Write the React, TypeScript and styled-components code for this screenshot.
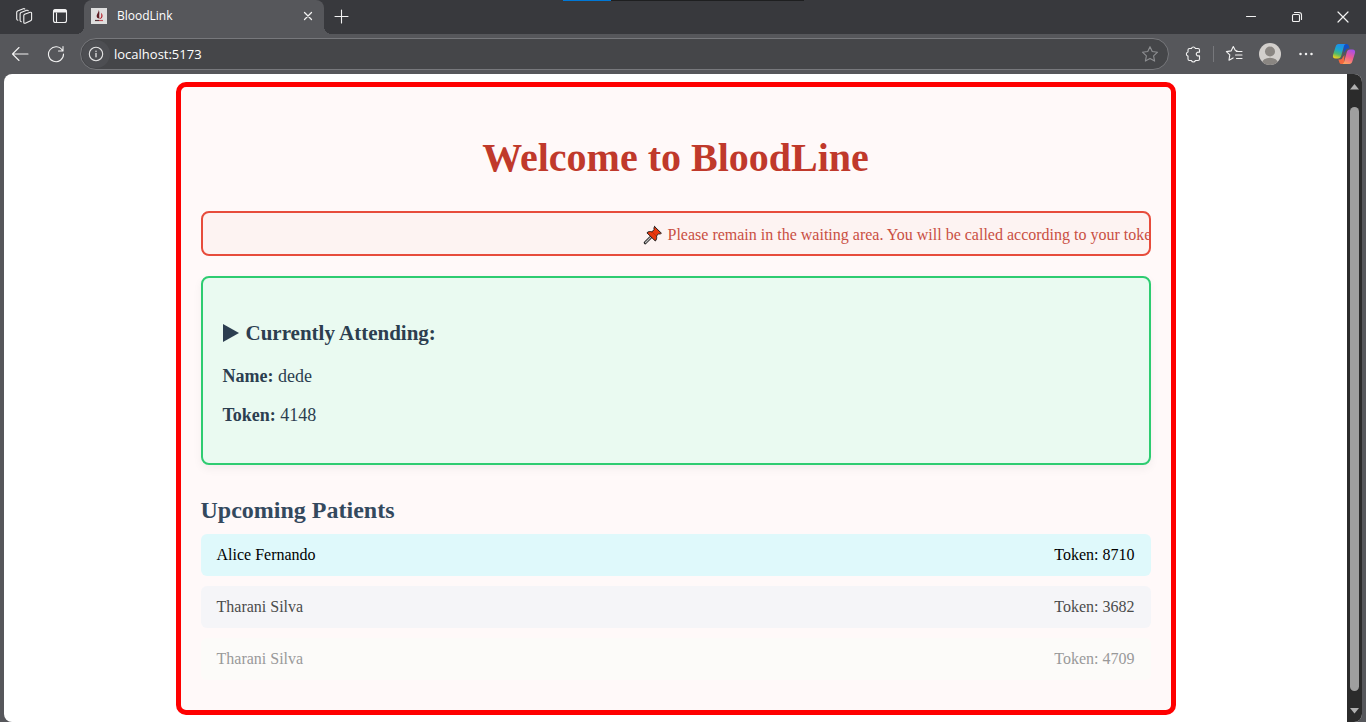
import React from "react";
import styled, { createGlobalStyle } from "styled-components";

const GlobalStyle = createGlobalStyle`
  * { box-sizing: border-box; }
  body { margin: 0; background: #56575b; }
  svg { display: block; flex: none; }
`;

const Window = styled.div`
  display: flex;
  flex-direction: column;
  min-height: 100vh;
  background: #56575b;
  font-family: "Open Sans", "Noto Sans", sans-serif;
`;

const TabStrip = styled.header`
  position: relative;
  display: flex;
  height: 34px;
  background: #38393d;
`;

const LoadingStrip = styled.div`
  position: absolute;
  top: 0;
  left: 563px;
  width: 241px;
  height: 1px;
  background: linear-gradient(to right, #0078d7 48px, #1e1f20 48px);
`;

const TabTools = styled.div`
  display: flex;
  align-items: center;
  gap: 12px;
  width: 84px;
  padding: 0 0 2px 12px;
`;

const IconButton = styled.button<{ $w?: number; $h?: number }>`
  display: flex;
  align-items: center;
  justify-content: center;
  flex: none;
  width: ${(p) => p.$w ?? 24}px;
  height: ${(p) => p.$h ?? 24}px;
  padding: 0;
  border: 0;
  background: none;
  color: #f2f2f2;
`;

const Tab = styled.div`
  position: relative;
  display: flex;
  align-items: center;
  width: 240px;
  padding: 0 4px 2px 7px;
  border-radius: 8px 8px 0 0;
  background: #56575b;

  &::before,
  &::after {
    content: "";
    position: absolute;
    bottom: 0;
    width: 8px;
    height: 8px;
  }
  &::before {
    right: 100%;
    background: radial-gradient(circle at 0 0, #38393d 8px, #56575b 8px);
  }
  &::after {
    left: 100%;
    background: radial-gradient(circle at 100% 0, #38393d 8px, #56575b 8px);
  }
`;

const TabTitle = styled.span`
  flex: 1;
  margin-left: 10px;
  color: #fff;
  font-size: 12px;
  line-height: 16px;
`;

const WindowControls = styled.div`
  display: flex;
  margin-left: auto;
`;

const Toolbar = styled.div`
  display: flex;
  align-items: center;
  height: 40px;
  padding-left: 2px;
`;

const AddressBar = styled.label`
  display: flex;
  align-items: center;
  flex: 1;
  height: 32px;
  margin: 0 12px 0 6px;
  padding: 0 6px 0 1px;
  border: 1px solid #77787c;
  border-radius: 16px;
  background: #454649;
`;

const InfoBadge = styled.span`
  display: flex;
  align-items: center;
  justify-content: center;
  width: 28px;
  height: 28px;
  border-radius: 50%;
  background: #4d4e52;
  color: #e4e4e4;
`;

const AddressInput = styled.input`
  flex: 1;
  min-width: 0;
  margin-left: 4px;
  padding: 0;
  border: 0;
  outline: 0;
  background: none;
  color: #fff;
  font: 13px/20px "Open Sans", "Noto Sans", sans-serif;
`;

const Divider = styled.span`
  width: 1px;
  height: 16px;
  margin: 0 4px 0 8px;
  background: #77787c;
`;

const Viewport = styled.div`
  display: flex;
  flex: 1;
  margin: 0 4px;
  border-radius: 8px;
  overflow: hidden;
  background: #fff;
`;

const Page = styled.main`
  flex: 1;
  min-width: 0;
  padding: 8px 8px 7px;
  font-family: "Liberation Serif", "Times New Roman", serif;
`;

const ScrollTrack = styled.div`
  display: flex;
  flex-direction: column;
  align-items: center;
  gap: 17px;
  width: 15px;
  padding: 10px 0 8px;
  background: #2b2b2b;
`;

const ScrollThumb = styled.div`
  flex: 1;
  width: 9px;
  border-radius: 5px;
  background: #9f9f9f;
`;

const Card = styled.section`
  max-width: 1000px;
  margin: 0 auto;
  padding: 20px;
  border: 5px solid #f00;
  border-radius: 10px;
  background: #fff9f9;
`;

const Title = styled.h1`
  margin: 28px 0 30px;
  color: #c0392b;
  font-size: 40px;
  line-height: 46px;
  text-align: center;
`;

const Notice = styled.div`
  display: flex;
  height: 45px;
  margin-bottom: 20px;
  overflow: hidden;
  border: 2px solid #e74c3c;
  border-radius: 8px;
  background: #fdf3f2;
`;

const NoticeText = styled.p`
  display: flex;
  align-items: center;
  gap: 5px;
  margin: 0 0 0 440px;
  padding-top: 3px;
  color: #c94f43;
  font-size: 16px;
  line-height: 20px;
  white-space: nowrap;
`;

const Current = styled.section`
  margin-bottom: 30px;
  padding: 40px 20px 38px;
  border: 2px solid #2ecc71;
  border-radius: 8px;
  background: #eafaf1;
  box-shadow: 0 4px 10px rgba(0, 0, 0, 0.05);
  color: #2c3e50;
`;

const CurrentHeading = styled.h3`
  display: flex;
  align-items: center;
  gap: 7px;
  margin: 3px 0 21px;
  font-size: 21px;
  line-height: 24px;
`;

const Detail = styled.p`
  margin: 0 0 19px;
  font-size: 18px;
  line-height: 20px;

  &:last-child {
    margin-bottom: 0;
  }
`;

const ListHeading = styled.h2`
  margin: 0 0 8px;
  color: #34495e;
  font-size: 24px;
  line-height: 31px;
`;

const List = styled.ul`
  margin: 0;
  padding: 0;
  list-style: none;
`;

const Patient = styled.li<{ $bg: string; $fg: string }>`
  display: flex;
  justify-content: space-between;
  margin-bottom: 10px;
  padding: 12px 16px;
  border-radius: 6px;
  background: ${(p) => p.$bg};
  color: ${(p) => p.$fg};
  font-size: 16px;
  line-height: 18px;
`;

const patients = [
  { name: "Alice Fernando", token: 8710, bg: "#dff9fb", fg: "#000" },
  { name: "Tharani Silva", token: 3682, bg: "#f5f5f8", fg: "#4b4b4b" },
  { name: "Tharani Silva", token: 4709, bg: "#fcfbf9", fg: "#999" },
];

type LineIconProps = { size?: number; children: React.ReactNode };
const LineIcon = ({ size = 16, children }: LineIconProps) => (
  <svg width={size} height={size} viewBox={`0 0 ${size} ${size}`} fill="none" stroke="currentColor" strokeWidth="1.1" strokeLinecap="round" strokeLinejoin="round" aria-hidden="true">
    {children}
  </svg>
);

const WorkspacesIcon = () => (
  <LineIcon size={18}>
    <path d="m9.600 7.300 5.600-2c.9-.2 1.400.2 1.400 1v5.900c0 .7-.3 1.200-1 1.500l-5.300 2.500c-.9.300-1.500 0-1.500-1V8.800c0-.7.200-1.200.8-1.500Z" />
    <path d="M6.300 14.800c-.8-.2-1.200-.6-1.200-1.500V7c0-.7.300-1.200.9-1.500l5.700-2.200c.6-.2 1.100-.1 1.500.3" />
    <path d="M2.900 13.200c-.8-.2-1.200-.7-1.200-1.500V5.500c0-.7.300-1.200.9-1.500l5.700-2.300c.6-.2 1.100-.1 1.500.3" />
  </LineIcon>
);

const VerticalTabsIcon = () => (
  <LineIcon>
    <rect x="1.500" y="1.500" width="13" height="13" rx="2" />
    <path d="M2.500 3.500h11M2.500 2.700h11" strokeWidth="2.200" />
    <path d="M4.500 5v9" />
  </LineIcon>
);

const Favicon = () => (
  <svg width="16" height="16" viewBox="0 0 16 16" aria-hidden="true">
    <path fill="#dedede" d="M0 0h16v16H0z" />
    <path fill="#5d1c22" d="M7.800 2c.8 2 .5 3.600.4 5.600 0 1.400.3 2 .1 3-1.700 0-2.900-1.300-2.600-3.100C6 5.700 7.600 4.500 7.800 2Z" />
    <path fill="#b3202b" d="M10.200 4.800c1.500 1.700 1.800 3.600.8 5-.7.900-1.700 1.100-3.200 1.100 1.700-.8 2.400-1.400 2.500-2.800.1-1.200-.2-1.900-.1-3.300Z" />
    <path stroke="#553338" strokeWidth="1.200" d="M4 12.500h4" />
    <path stroke="#c14c54" strokeWidth="1.200" d="M8 12.500h4" />
  </svg>
);

const CopilotIcon = () => (
  <svg width="24" height="22" viewBox="0 0 24 22" aria-hidden="true">
    <defs>
      <linearGradient id="cpLeft" x1="0.600" y1="0" x2="0.300" y2="1">
        <stop offset="0" stopColor="#1b8df0" />
        <stop offset="0.400" stopColor="#1ba6cf" />
        <stop offset="0.700" stopColor="#4fb96b" />
        <stop offset="1" stopColor="#f0d01c" />
      </linearGradient>
      <linearGradient id="cpRight" x1="0.700" y1="0" x2="0.300" y2="1">
        <stop offset="0" stopColor="#a64fe8" />
        <stop offset="0.500" stopColor="#ee5c91" />
        <stop offset="1" stopColor="#ffa35c" />
      </linearGradient>
    </defs>
    <path fill="#1250c4" d="M12 1h2.600c1.200 0 1.800.7 2.100 1.800l.8 2.700h-1.700c-1.300 0-2 .8-2.400 2L11.600 10Z" />
    <path fill="#f3683e" d="M12 21H9.400c-1.200 0-1.800-.7-2.100-1.800l-.9-2.700h1.800c1.300 0 2-.8 2.400-2l1.800-2.500Z" />
    <path fill="url(#cpLeft)" d="M6.600 1H14c-1.300.3-1.800 1.200-2.200 2.500L9.400 12.200C8.700 14.500 7.900 15.500 5.900 15.500H3.600C1.300 15.500.4 14 1.100 11.700L3.600 3.700C4.200 1.900 5 1 6.600 1Z" />
    <path fill="url(#cpRight)" d="M17.400 21H10c1.300-.3 1.800-1.200 2.200-2.500l2.400-8.700C15.300 7.500 16.100 6.500 18.100 6.500h2.300c2.300 0 3.200 1.500 2.500 3.800l-2.500 8c-.6 1.800-1.400 2.700-3 2.700Z" />
  </svg>
);

const AvatarIcon = () => (
  <svg width="22" height="22" viewBox="0 0 22 22" aria-hidden="true">
    <clipPath id="avatarClip"><circle cx="11" cy="11" r="11" /></clipPath>
    <g clipPath="url(#avatarClip)">
      <path fill="#d2cfcc" d="M0 0h22v22H0z" />
      <circle cx="11" cy="8.500" r="5" fill="#8a8682" />
      <ellipse cx="11" cy="20" rx="8" ry="5.200" fill="#8a8682" />
    </g>
  </svg>
);

const PushpinIcon = () => (
  <svg width="20" height="20" viewBox="0 0 20 20" strokeLinejoin="round" strokeLinecap="round" aria-hidden="true">
    <path d="m7.500 12.500-5.300 5.300" stroke="#222" strokeWidth="3" />
    <path d="m7.500 12.500-5 5" stroke="#b9b9b9" strokeWidth="1.200" />
    <path fill="#e8380d" stroke="#222" d="M11.600 1.600 18.400 8.200c-.9.900-2 .9-2.900.6l-2 2.200c.5 1.900.1 3.700-1.200 5L3.900 7.800c1.400-1.300 3.200-1.600 4.900-1l2.400-2.100c-.4-1.100-.4-2.200.4-3.100Z" />
    <path stroke="#b92a06" strokeWidth="0.800" d="m9 7 4.300 4" />
  </svg>
);

const star = "m8 1.500 2 4.300 4.700.6-3.500 3.200.9 4.700L8 12l-4.100 2.300.9-4.700L1.300 6.400 6 5.800Z";

export default function App() {
  return (
    <>
      <GlobalStyle />
      <Window>
        <TabStrip>
          <LoadingStrip />
          <TabTools>
            <IconButton aria-label="Workspaces"><WorkspacesIcon /></IconButton>
            <IconButton aria-label="Tab actions"><VerticalTabsIcon /></IconButton>
          </TabTools>
          <Tab>
            <Favicon />
            <TabTitle>BloodLink</TabTitle>
            <IconButton aria-label="Close tab">
              <LineIcon><path d="m4.500 4.500 7 7m0-7-7 7" strokeWidth="1.300" /></LineIcon>
            </IconButton>
          </Tab>
          <IconButton $w={34} $h={32} aria-label="New tab">
            <LineIcon><path d="M8.500 2v13M2 8.500h13" /></LineIcon>
          </IconButton>
          <WindowControls>
            <IconButton $w={46} $h={34} aria-label="Minimize">
              <LineIcon><path d="M3.500 7.500h9" /></LineIcon>
            </IconButton>
            <IconButton $w={46} $h={34} aria-label="Restore">
              <LineIcon>
                <rect x="3.500" y="5.500" width="7" height="7" rx="1" />
                <path d="M5.500 3.500H10c1.700 0 2.500.8 2.500 2.500v4.500" />
              </LineIcon>
            </IconButton>
            <IconButton $w={46} $h={34} aria-label="Close window">
              <LineIcon><path d="m3 3 10 10m0-10L3 13" strokeWidth="1.200" /></LineIcon>
            </IconButton>
          </WindowControls>
        </TabStrip>

        <Toolbar>
          <IconButton $w={36} $h={32} aria-label="Back">
            <LineIcon size={18}><path d="M17 9H1.500M8 2.500 1.500 9 8 15.500" /></LineIcon>
          </IconButton>
          <IconButton $w={36} $h={32} aria-label="Refresh">
            <LineIcon size={18}><path d="M15.500 5.500A7.500 7.500 0 1 0 16.500 9M16 1.500v4.500h-4.500" /></LineIcon>
          </IconButton>
          <AddressBar>
            <InfoBadge>
              <LineIcon>
                <circle cx="8" cy="8" r="6.700" />
                <path d="M8 7.500v3.300" strokeWidth="1.300" />
                <path d="M8 5.200v.1" strokeWidth="1.500" />
              </LineIcon>
            </InfoBadge>
            <AddressInput aria-label="Address" defaultValue="localhost:5173" spellCheck={false} />
            <IconButton aria-label="Add to favorites">
              <svg width="18" height="18" viewBox="0 0 16 16" fill="none" stroke="#8d8e91" strokeLinejoin="round"><path d={star} /></svg>
            </IconButton>
          </AddressBar>
          <IconButton aria-label="Extensions">
            <LineIcon size={18}>
              <path d="M5.500 3.500h1.900a2.100 2.100 0 0 1 4 0H14c.9 0 1.500.5 1.500 1.400v2.300h-.9a1.900 1.900 0 1 0 0 3.700h.9v3.200c0 .9-.6 1.400-1.500 1.400h-2.600a2.100 2.100 0 0 1-4 0H5.500c-.9 0-1.500-.5-1.500-1.400v-3a2.100 2.100 0 0 1 0-4.100V4.900c0-.9.600-1.400 1.500-1.400Z" />
            </LineIcon>
          </IconButton>
          <Divider />
          <IconButton $w={32} aria-label="Favorites">
            <LineIcon size={18}>
              <path d="m12 5.800-1.500-.1L8.300 1.500 6.100 5.900l-4.700.7 3.400 3.300-.8 5.300 4.100-2.300M11.500 6.500H17M10.500 10H17M11.500 13.500H17" />
            </LineIcon>
          </IconButton>
          <IconButton $w={40} aria-label="Profile"><AvatarIcon /></IconButton>
          <IconButton $w={32} aria-label="Settings and more">
            <LineIcon><path d="M2.500 8h.01M8 8h.01M13.500 8h.01" strokeWidth="2.500" /></LineIcon>
          </IconButton>
          <IconButton $w={44} $h={32} aria-label="Copilot"><CopilotIcon /></IconButton>
        </Toolbar>

        <Viewport>
          <Page>
            <Card>
              <Title>Welcome to BloodLine</Title>
              <Notice>
                <NoticeText>
                  <PushpinIcon />
                  Please remain in the waiting area. You will be called according to your token number.
                </NoticeText>
              </Notice>
              <Current>
                <CurrentHeading>
                  <svg width="16" height="18" viewBox="0 0 16 18" fill="currentColor" aria-hidden="true"><path d="M0 0v18l16-9Z" /></svg>
                  Currently Attending:
                </CurrentHeading>
                <Detail><strong>Name:</strong> dede</Detail>
                <Detail><strong>Token:</strong> 4148</Detail>
              </Current>
              <ListHeading>Upcoming Patients</ListHeading>
              <List>
                {patients.map((p) => (
                  <Patient key={p.token} $bg={p.bg} $fg={p.fg}>
                    <span>{p.name}</span>
                    <span>Token: {p.token}</span>
                  </Patient>
                ))}
              </List>
            </Card>
          </Page>
          <ScrollTrack aria-hidden="true">
            <svg width="9" height="6" viewBox="0 0 9 6" fill="#b0b0b0"><path d="M4.500 0 9 5.500H0Z" /></svg>
            <ScrollThumb />
            <svg width="9" height="6" viewBox="0 0 9 6" fill="#b0b0b0"><path d="M4.500 5.500 9 0H0Z" /></svg>
          </ScrollTrack>
        </Viewport>
      </Window>
    </>
  );
}
